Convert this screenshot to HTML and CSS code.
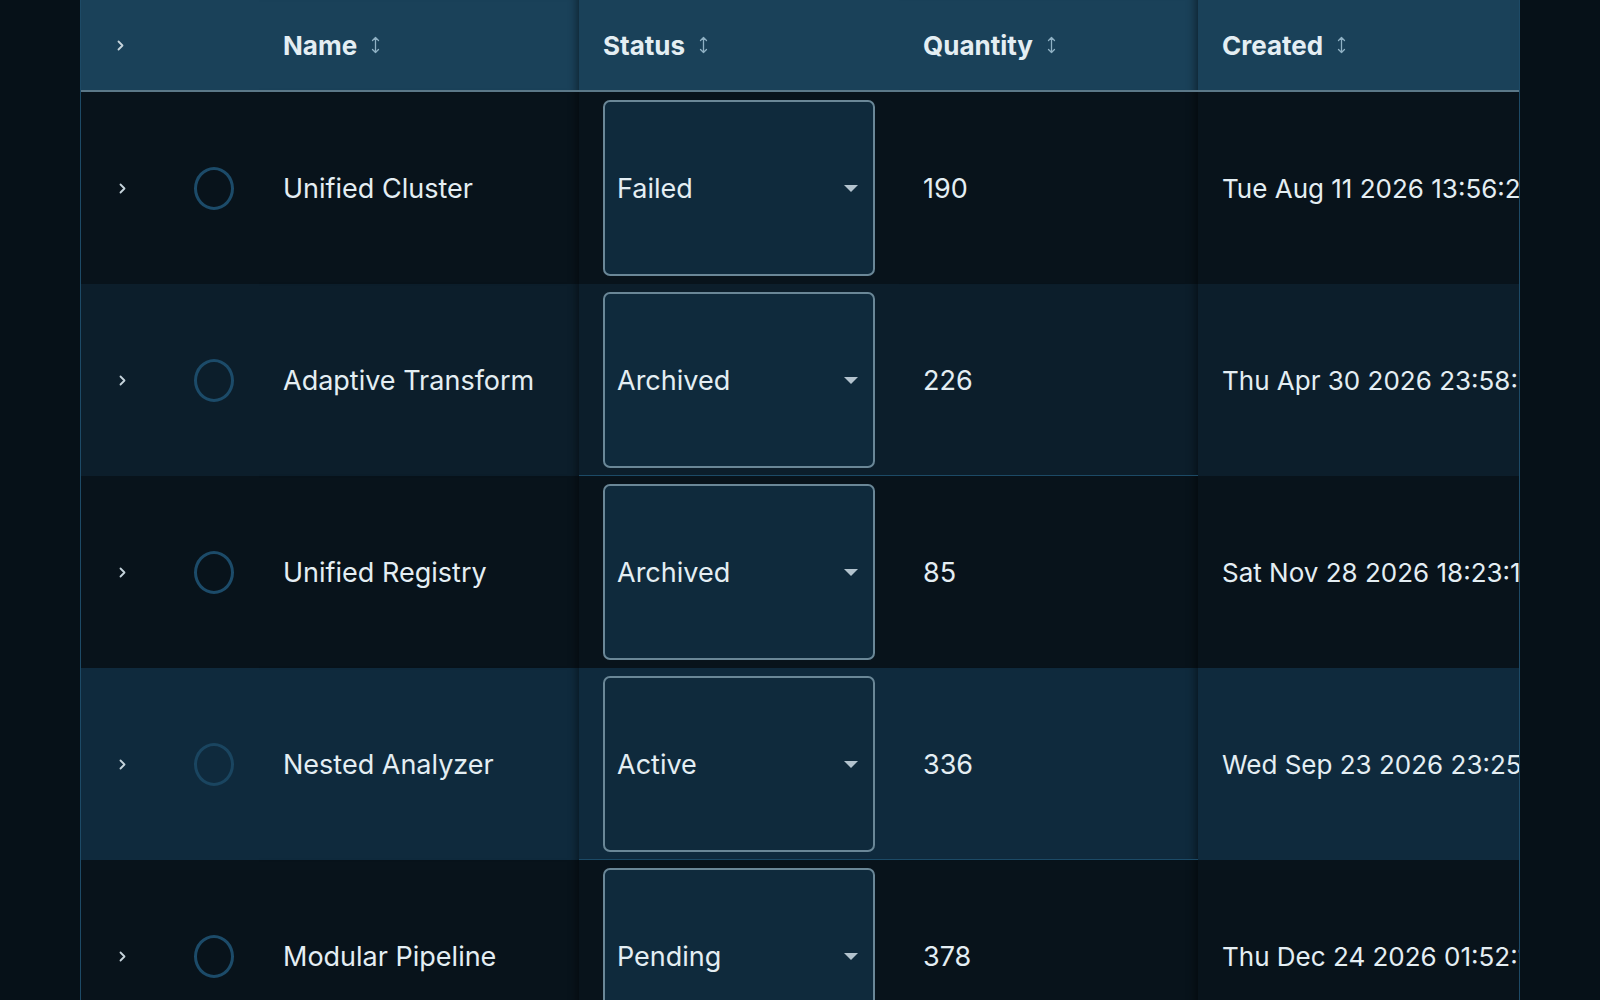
FILE: index.html
```html
<!DOCTYPE html>
<html lang="en">
<head>
    <meta charset="UTF-8">
    <meta name="viewport" content="width=device-width, initial-scale=1.0">
    <title>Items</title>
    <link rel="stylesheet" href="styles.css">
</head>
<body>
    <div class="table-wrap">
        <div class="row head">
            <div class="cell expand"><svg class="chev" width="7" height="11" viewBox="0 0 7 11"><polyline points="1.5,1.5 5.5,5.5 1.5,9.5"/></svg></div>
            <div class="cell pick"></div>
            <div class="cell name pin-edge">Name <svg class="sort" width="9" height="18" viewBox="0 0 9 18"><path d="M4.5 1.5v15M1.5 4.5l3-3 3 3M1.5 13.5l3 3 3-3"/></svg></div>
            <div class="cell status">Status <svg class="sort" width="9" height="18" viewBox="0 0 9 18"><path d="M4.5 1.5v15M1.5 4.5l3-3 3 3M1.5 13.5l3 3 3-3"/></svg></div>
            <div class="cell qty shade-right">Quantity <svg class="sort" width="9" height="18" viewBox="0 0 9 18"><path d="M4.5 1.5v15M1.5 4.5l3-3 3 3M1.5 13.5l3 3 3-3"/></svg></div>
            <div class="cell created">Created <svg class="sort" width="9" height="18" viewBox="0 0 9 18"><path d="M4.5 1.5v15M1.5 4.5l3-3 3 3M1.5 13.5l3 3 3-3"/></svg></div>
        </div>

        <div class="row">
            <div class="cell expand"><svg class="chev" width="7" height="11" viewBox="0 0 7 11"><polyline points="1.5,1.5 5.5,5.5 1.5,9.5"/></svg></div>
            <div class="cell pick"><span class="radio"></span></div>
            <div class="cell name pin-edge">Unified Cluster</div>
            <div class="cell status"><div class="select"><span>Failed</span><i class="caret"></i></div></div>
            <div class="cell qty shade-right">190</div>
            <div class="cell created">Tue Aug 11 2026 13:56:27 GMT+0000</div>
        </div>

        <div class="row striped">
            <div class="cell expand"><svg class="chev" width="7" height="11" viewBox="0 0 7 11"><polyline points="1.5,1.5 5.5,5.5 1.5,9.5"/></svg></div>
            <div class="cell pick"><span class="radio"></span></div>
            <div class="cell name pin-edge">Adaptive Transform</div>
            <div class="cell status"><div class="select"><span>Archived</span><i class="caret"></i></div></div>
            <div class="cell qty shade-right">226</div>
            <div class="cell created">Thu Apr 30 2026 23:58:04 GMT+0000</div>
        </div>

        <div class="row">
            <div class="cell expand"><svg class="chev" width="7" height="11" viewBox="0 0 7 11"><polyline points="1.5,1.5 5.5,5.5 1.5,9.5"/></svg></div>
            <div class="cell pick"><span class="radio"></span></div>
            <div class="cell name pin-edge">Unified Registry</div>
            <div class="cell status"><div class="select"><span>Archived</span><i class="caret"></i></div></div>
            <div class="cell qty shade-right">85</div>
            <div class="cell created">Sat Nov 28 2026 18:23:11 GMT+0000</div>
        </div>

        <div class="row striped hovered">
            <div class="cell expand"><svg class="chev" width="7" height="11" viewBox="0 0 7 11"><polyline points="1.5,1.5 5.5,5.5 1.5,9.5"/></svg></div>
            <div class="cell pick"><span class="radio"></span></div>
            <div class="cell name pin-edge">Nested Analyzer</div>
            <div class="cell status"><div class="select"><span>Active</span><i class="caret"></i></div></div>
            <div class="cell qty shade-right">336</div>
            <div class="cell created">Wed Sep 23 2026 23:25:40 GMT+0000</div>
        </div>

        <div class="row">
            <div class="cell expand"><svg class="chev" width="7" height="11" viewBox="0 0 7 11"><polyline points="1.5,1.5 5.5,5.5 1.5,9.5"/></svg></div>
            <div class="cell pick"><span class="radio"></span></div>
            <div class="cell name pin-edge">Modular Pipeline</div>
            <div class="cell status"><div class="select"><span>Pending</span><i class="caret"></i></div></div>
            <div class="cell qty shade-right">378</div>
            <div class="cell created">Thu Dec 24 2026 01:52:19 GMT+0000</div>
        </div>
    </div>
</body>
</html>
```

FILE: styles.css
```css
body {
    margin: 0;
    background: #061118;
    font-family: 'Inter', 'Liberation Sans', sans-serif;
    color: #e4eef3;
    height: 100vh;
    overflow: hidden;
}
.table-wrap {
    width: 1440px;
    box-sizing: border-box;
    margin: 0 auto;
    border-left: 1px solid #1d4a66;
    border-right: 1px solid #1d4a66;
    overflow: hidden;
    height: 100vh;
}
.row {
    display: grid;
    grid-template-columns: 80px 98px 320px 320px 299px 420px;
    height: 192px;
    background: #08131b;
    font-size: 27px;
}
.row.striped {
    background: #0c1e2b;
}
.row.hovered {
    background: #0f2a3d;
}
.row.head {
    height: 92px;
    background: #1a4159;
    border-bottom: 2px solid #5b7888;
    box-sizing: border-box;
    font-size: 26px;
    font-weight: 700;
}
.cell {
    display: flex;
    align-items: center;
    padding: 0 24px;
    white-space: nowrap;
    overflow: hidden;
    box-sizing: border-box;
}
.cell.created {
    font-size: 26px;
}
.cell.expand {
    padding: 0 0 0 38px;
}
.cell.pick {
    padding: 0 0 0 33px;
}
.cell.status {
    padding: 8px 24px 8px 24px;
    align-items: stretch;
}
.head .cell.status {
    padding: 0 24px;
    align-items: center;
}
.pin-edge {
    box-shadow: inset -10px 0 8px -8px rgba(0, 0, 0, 0.45);
}
.shade-right {
    box-shadow: inset -12px 0 10px -10px rgba(0, 0, 0, 0.5);
}
.striped .status {
    box-shadow: inset 0 -1px 0 #1c4a66;
}
.striped .qty.shade-right {
    box-shadow: inset 0 -1px 0 #1c4a66, inset -12px 0 10px -10px rgba(0, 0, 0, 0.5);
}
.chev {
    fill: none;
    stroke: #c6d4dc;
    stroke-width: 1.8;
    stroke-linecap: round;
    stroke-linejoin: round;
}
.head .chev {
    margin-left: -2px;
}
.sort {
    margin-left: 14px;
    fill: none;
    stroke: #8fb1c4;
    stroke-width: 1.3;
    stroke-linecap: round;
    stroke-linejoin: round;
}
.radio {
    width: 40px;
    height: 43px;
    box-sizing: border-box;
    border: 3px solid #1c4b69;
    border-radius: 50%;
}
.hovered .radio {
    border-color: #1a4560;
}
.select {
    flex: 1;
    display: flex;
    align-items: center;
    justify-content: space-between;
    background: #0f2a3c;
    border: 2px solid #6a8797;
    border-radius: 7px;
    padding: 0 15px 0 12px;
    font-weight: 400;
}
.caret {
    width: 0;
    height: 0;
    border-left: 7.5px solid transparent;
    border-right: 7.5px solid transparent;
    border-top: 7.5px solid #b3c3ce;
}
```
